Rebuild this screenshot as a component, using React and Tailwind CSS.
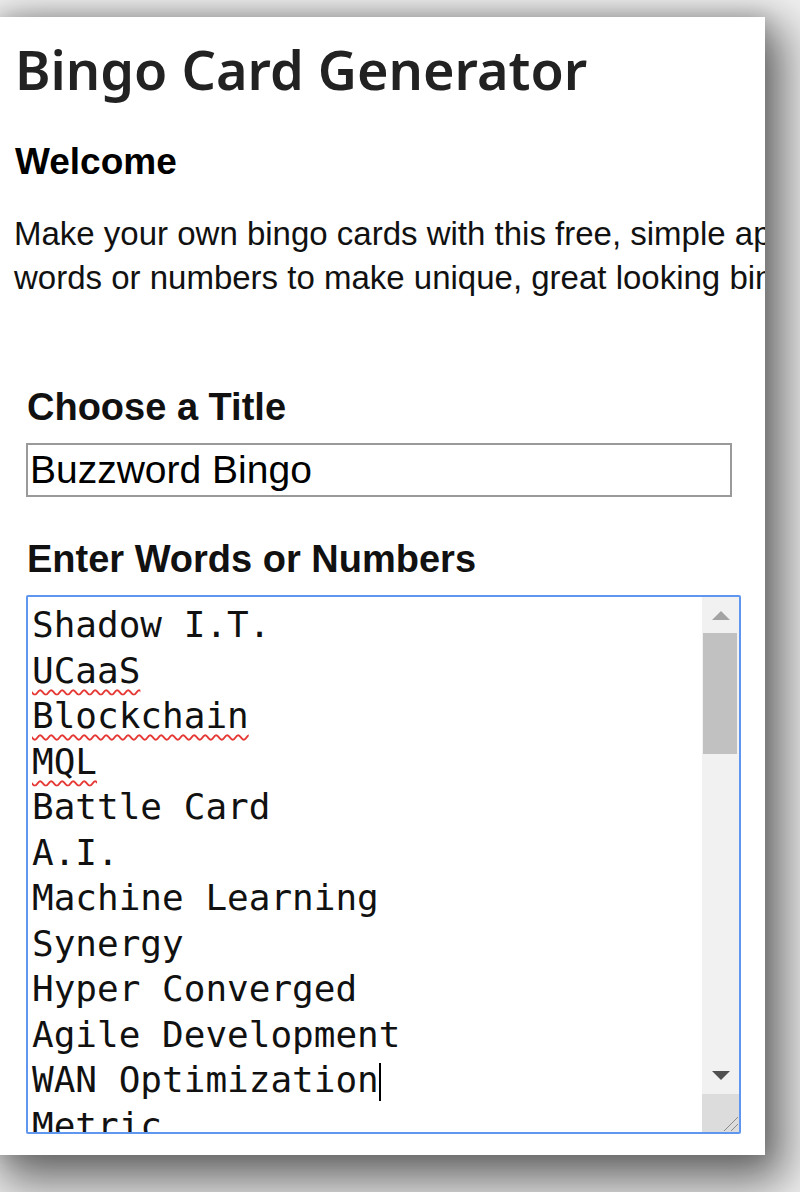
import React from 'react';

const words = [
  { text: 'Shadow I.T.' },
  { text: 'UCaaS', typo: true },
  { text: 'Blockchain', typo: true },
  { text: 'MQL', typo: true },
  { text: 'Battle Card' },
  { text: 'A.I.' },
  { text: 'Machine Learning' },
  { text: 'Synergy' },
  { text: 'Hyper Converged' },
  { text: 'Agile Development' },
  { text: 'WAN Optimization', caret: true },
  { text: 'Metric' },
];

const sans = { fontFamily: '"Liberation Sans", Arial, sans-serif' };

const Scrollbar = () => (
  <div className="w-[37px] shrink-0 flex flex-col bg-[#f1f1f1]">
    <div className="h-[36px] flex items-center justify-center">
      <svg width="18" height="9" viewBox="0 0 18 9">
        <polygon points="9,0 18,9 0,9" fill="#a3a3a3" />
      </svg>
    </div>
    <div className="h-[121px] ml-[1px] mr-[2px] bg-[#c1c1c1]" />
    <div className="flex-1" />
    <div className="h-[37px] flex items-center justify-center">
      <svg width="18" height="9" viewBox="0 0 18 9">
        <polygon points="0,0 18,0 9,9" fill="#505050" />
      </svg>
    </div>
    <div className="h-[38px] bg-[#dcdcdc] relative">
      <svg className="absolute right-0 bottom-0" width="20" height="20" viewBox="0 0 20 20">
        <line x1="19" y1="5" x2="5" y2="19" stroke="#8a8a8a" strokeWidth="1" />
        <line x1="19" y1="12" x2="12" y2="19" stroke="#8a8a8a" strokeWidth="1" />
      </svg>
    </div>
  </div>
);

const WordList = () => (
  <div className="h-[539px] w-[715px] border-2 border-[#5e96f0] rounded-[2px] flex bg-white">
    <div
      className="flex-1 overflow-hidden pl-[4px] pt-[5px] text-[36px] leading-[45.5px] text-[#111]"
      style={{ fontFamily: '"DejaVu Sans Mono", monospace' }}
    >
      {words.map((w) => (
        <div key={w.text} className="whitespace-pre">
          {w.typo ? (
            <span className="underline decoration-wavy decoration-[#e53935] decoration-2 underline-offset-[6px]">
              {w.text}
            </span>
          ) : (
            w.text
          )}
          {w.caret && <span className="inline-block w-[2px] h-[38px] bg-black align-[-9px]" />}
        </div>
      ))}
    </div>
    <Scrollbar />
  </div>
);

export default function App() {
  return (
    <div className="w-[800px] h-[1192px] bg-[#f2f2f2] overflow-hidden pt-[17px]">
      <div className="w-[765px] h-[1138px] bg-white overflow-hidden flex flex-col shadow-[0_0_18px_2px_rgba(0,0,0,0.14),10px_18px_44px_10px_rgba(0,0,0,0.55)]">
        <h1
          className="mt-[22px] pl-[15px] text-[54px] leading-[60px] font-semibold text-[#222]"
          style={{ fontFamily: '"Noto Sans", sans-serif' }}
        >
          Bingo Card Generator
        </h1>
        <h2 className="mt-[41px] pl-[15px] text-[37px] leading-[44px] font-bold text-black" style={sans}>
          Welcome
        </h2>
        <p className="mt-[28px] pl-[14px] text-[33px] leading-[44px] text-[#111] whitespace-nowrap" style={sans}>
          Make your own bingo cards with this free, simple app. Enter your own
          <br />
          words or numbers to make unique, great looking bingo cards in seconds.
        </p>

        <form className="pl-[26px] flex flex-col" style={sans}>
          <label className="mt-[85px] pl-[1px] text-[38px] leading-[44px] font-bold text-[#111]">
            Choose a Title
          </label>
          <input
            type="text"
            defaultValue="Buzzword Bingo"
            className="mt-[14px] w-[706px] h-[54px] border-2 border-[#9a9a9a] px-[2px] text-[39px] text-black outline-none"
            style={sans}
          />
          <label className="mt-[40px] pl-[1px] text-[38px] leading-[44px] font-bold text-[#111]">
            Enter Words or Numbers
          </label>
          <div className="mt-[14px]">
            <WordList />
          </div>
        </form>
      </div>
    </div>
  );
}
